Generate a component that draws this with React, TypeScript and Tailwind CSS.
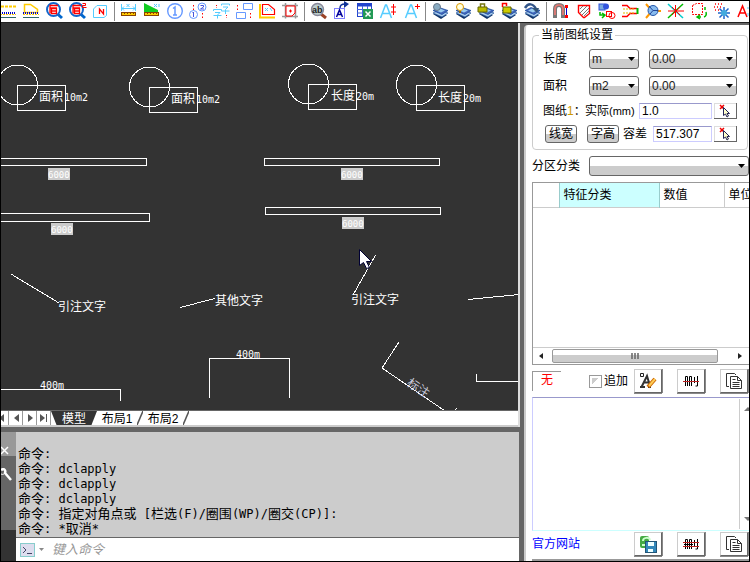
import React from "react";

const UI = "font-['Liberation_Sans','Noto_Sans_CJK_SC',sans-serif]";
const MONO = "font-['DejaVu_Sans_Mono','Noto_Sans_CJK_SC',monospace]";

type IconProps = { children: React.ReactNode };

function ToolIcon({ children }: IconProps) {
  return (
    <svg width="23" height="21" viewBox="0 0 23 21" fill="none" aria-hidden="true">
      {children}
    </svg>
  );
}

function Ruler() {
  return (
    <g>
      <rect x="4.500" y="11.500" width="14" height="3" fill="#fc0" stroke="#840" />
      <path d="M7.500 11v2M10.500 11v2M13.500 11v2M16.500 11v2" stroke="#840" />
    </g>
  );
}

function GroundLines() {
  return (
    <g>
      <path d="M4 12h16" stroke="#00c" strokeDasharray="1 1" strokeWidth="2" />
      <path d="M4 13.500h16" stroke="#fc0" strokeDasharray="2 1" />
      <path d="M4 16.500h16" stroke="#366" />
    </g>
  );
}

function Magnifier() {
  return (
    <g>
      <path d="M15 12.500l5 4.500" stroke="#06c" strokeWidth="3" />
      <circle cx="11.500" cy="8.500" r="6.500" fill="#fff" stroke="#16c" strokeWidth="2" />
      <path d="M8 12.500V4.500h8M9.500 7.500h5v5h-5zM8 7h7M9.500 10h5" stroke="#f00" strokeWidth="1.300" />
    </g>
  );
}

function Layers() {
  return (
    <g>
      <path d="M5 13l5-2 9 3-6 4z" fill="#136" />
      <path d="M5 12l6-3 9 3-6 4z" fill="#ace" stroke="#259" strokeWidth=".7" />
      <path d="M5 9.500l6-3 9 3-6 4z" fill="#46b" stroke="#149" strokeWidth=".7" />
      <path d="M8 9.500l4-2 5 2-4 2z" fill="#9ce" />
    </g>
  );
}

const blue = "#69f";
const sky = "#5cf";

const groups: { label: string; art: React.ReactNode }[][] = [
  [
    { label: "线", art: <><path d="M5 5.500h15" stroke="#fc0" strokeWidth="2" strokeDasharray="3 1" /><GroundLines /></> },
    { label: "面", art: <><path d="M5.500 11.500v-8h6l7 5v3z" stroke="#fc0" strokeWidth="1.500" /><GroundLines /></> },
    { label: "查找", art: <Magnifier /> },
    { label: "查找2", art: <><Magnifier /><path d="M17.500 2.500h3v2h-3v2h4" stroke="#f00" /></> },
    { label: "编号", art: <><path d="M9 4.500h9.500v10L16 16.500H5.500V8z" stroke={sky} /><path d="M11.500 13V8l4 5V8" stroke="#f00" strokeWidth="1.300" /></> },
  ],
  [
    { label: "测长", art: <><path d="M4.500 3v7M18.500 3v7M5 7.500h13M7 5.500l-2 2 2 2M16 5.500l2 2-2 2M9.500 3l3 3m0-3l-3 3" stroke={sky} /><Ruler /></> },
    { label: "测面", art: <><path d="M4 2l14 7v2H4z" fill="#1c2" /><path d="M14 3l3 3m0-3l-3 3m5-3v3" stroke={sky} /><Ruler /></> },
    { label: "序号", art: <><circle cx="12" cy="10" r="7.300" stroke={blue} strokeWidth="1.400" /><path d="M10 7.500l2-1.500v8M10 14h4" stroke={blue} strokeWidth="1.500" /></> },
    { label: "重排序号", art: <><circle cx="7.500" cy="13.500" r="4" stroke={blue} /><circle cx="16" cy="6" r="4" stroke={blue} /><path d="M6.500 12l1-1v5M14.500 4.500h3v1.500l-3 2h3.500" stroke="#45d" /><path d="M7.500 4v5M16.500 12v5" stroke="#f00" strokeDasharray="1.500 2" /></> },
    { label: "文字", art: <><path d="M4.500 10V8.500h8V10M6 11.500h5L8.500 14v3.500M4.500 14.500h8M12.500 4.500V3h8v1.500M14 6h5l-2.500 2.500V13M12.500 10h8" stroke={sky} /><path d="M7.500 4v3M17.500 14v3" stroke="#f00" strokeDasharray="1 1.500" /></> },
    { label: "图框", art: <><path d="M4.500 11.500h9v6h-9zM11.500 2.500h9v6h-9z" stroke={blue} /><path d="M5.500 4v5M18.500 12v5" stroke="#f00" strokeDasharray="1.500 2" /></> },
    { label: "区域标尺", art: <><path d="M5 3v13.500h15" stroke="#fc0" strokeWidth="2" /><path d="M7.500 13.500v-10h6l6 5v5z" stroke="#f00" strokeWidth="1.200" /><path d="M10 7l3 3m0-3l-3 3m5-3l2 3" stroke={sky} /></> },
    { label: "裁剪", art: <><path d="M7.500 2v15.500M17.500 2v15.500M4 4.500h16M4 15.500h16" stroke="#999" strokeWidth="1.500" /><path d="M8 5h9v7l-3 3H8z" fill="#fff" stroke="#f00" /><path d="M12.500 8.500v3M11 10h3" stroke="#f00" /></> },
  ],
  [
    { label: "查找文字", art: <><path d="M14 13l5 4" stroke="#9a4326" strokeWidth="3" /><circle cx="10.500" cy="8.500" r="6" fill="#bcc" stroke="#889" strokeWidth="1.400" /><text x="5" y="12" fontSize="9" fontWeight="700" fill="#222" fontFamily="Liberation Sans">ab</text></> },
    { label: "文字移动", art: <><rect x="4.500" y="7.500" width="10" height="10" stroke="#00f" strokeDasharray="1 1" /><path d="M6.500 16l3-7 3 7M8 13.500h4" stroke="#009" strokeWidth="1.500" /><path d="M10 7c0-3 2-4 5-4" stroke="#139" strokeWidth="1.500" /><path d="M14 0l5 3-5 4z" fill="#139" /></> },
    { label: "导出表格", art: <><rect x="4.500" y="2.500" width="14" height="13" fill="#fff" stroke="#24c" /><path d="M4 4h15" stroke="#24c" strokeWidth="3" /><path d="M4 8.500h15M4 12h15M9.500 5v10M14.500 5v10" stroke="#46d" /><rect x="10" y="8" width="10" height="10" fill="#295" /><path d="M12.500 10.500l5 5m0-5l-5 5" stroke="#fff" strokeWidth="1.500" /></> },
    { label: "文字高度", art: <><path d="M4.500 17l5-13h1l5 13M6 12.500h8" stroke={sky} strokeWidth="1.500" /><path d="M17.500 3v11M15 6h5M15 11h5" stroke="#f00" /></> },
    { label: "文字加高", art: <><path d="M6.500 17l5-13h1l5 13M8 12.500h8" stroke={sky} strokeWidth="1.500" /><path d="M18.500 3v5M16 5.500h5" stroke="#f00" /></> },
  ],
  [
    { label: "图层关闭", art: <><Layers /><circle cx="9" cy="6" r="3.500" fill="#8aacc2" stroke="#678" /></> },
    { label: "图层打开", art: <><Layers /><circle cx="9" cy="6" r="3.500" fill="#ffd" stroke="#d90" /><path d="M8 10h2v2H8z" fill="#960" /></> },
    { label: "图层锁定", art: <><Layers /><path d="M6.500 6V3h4v3" stroke="#771" strokeWidth="1.500" /><path d="M4 6h9v5H4z" fill="#bb0" stroke="#660" /></> },
    { label: "图层解锁", art: <><Layers /><path d="M5.500 6V2.500h4V5" stroke="#f00" strokeWidth="1.500" /><path d="M6 6h8v6H6z" fill="#cc0" stroke="#660" /></> },
    { label: "图层恢复", art: <><Layers /><path d="M5 7c3-5 8-5 11 1" stroke="#358" strokeWidth="2.500" /><path d="M12 7h7l-2 5z" fill="#357" /></> },
  ],
  [
    { label: "吸附", art: <><path d="M6 17V8q0-4 4-4t4 4v9" stroke="#777" strokeWidth="4" /><path d="M6 14V8q0-4 4-4t4 4v6" stroke="#e87872" strokeWidth="1.700" /><path d="M17.500 5v11" stroke="#00c" /><path d="M16 4h3v3h-3zM16 14h3v3h-3z" fill="#f00" /></> },
    { label: "填充", art: <><path d="M6.500 4.500h11v8l-5 4h-1l-5-5z" stroke="#f00" strokeWidth="1.400" /><path d="M8 8l3-3M8 12l7-7M10 14l7-7M12 15l5-5" stroke="#777" /></> },
    { label: "复制图形", art: <><rect x="4" y="3" width="6" height="6" fill="#7ad" stroke="#35d" /><circle cx="11" cy="5.500" r="3" fill="#35d" /><path d="M5 11v3h4M7 12l3 2-3 3" stroke="#0b0" strokeWidth="1.500" /><rect x="11.500" y="10.500" width="5" height="5" stroke="#f00" /><circle cx="17" cy="14.500" r="3" stroke="#f00" /></> },
    { label: "延伸", art: <><path d="M4 4.500h5l3 3h7M4 15.500h5l3-3h7" stroke="#f00" strokeWidth="1.500" /><path d="M5 8h11M5 12h11" stroke="#db0" strokeDasharray="2 1" /><path d="M19.500 7v6" stroke="#0b0" strokeWidth="2" /></> },
    { label: "交点", art: <><path d="M5 3l6 7h9M5 17l6-7" stroke="#f90" strokeWidth="2" /><circle cx="12" cy="9.500" r="5" fill="#8be" stroke="#25a" /><path d="M12 9.500L8 5M12 9.500h5M12 9.500L9 13" stroke="#249" /></> },
    { label: "打断", art: <><path d="M4 3l15 14" stroke="#0cc" strokeWidth="1.500" /><path d="M19 3L4 17" stroke="#0b0" strokeWidth="1.500" /><path d="M11.500 4v12M4 10h16M8 6l8 8M8 14l8-8" stroke="#f00" /></> },
    { label: "旋转", art: <><path d="M5.500 4.500l4-2h6v11h-10z" stroke="#f00" strokeDasharray="2 1" /><path d="M18 6v3M10 16h4M17 16q3-1 2-5M13 14l-3 2 3 2" stroke="#0b0" strokeWidth="1.500" /></> },
    { label: "爆炸", art: <><path d="M5 3h8M4 6h9M5 9h4" stroke="#f00" strokeDasharray="1 2" strokeWidth="1.500" /><path d="M14 6v12M8 12h12M9.500 7.500l9 9M18.500 7.500l-9 9" stroke="#26c" strokeWidth="1.500" /><circle cx="14" cy="12" r="3" fill="#4ad" /></> },
    { label: "文字样式", art: <><path d="M5 16L9.500 5 14 16M7 12h5" stroke="#f00" strokeWidth="1.500" /><path d="M15 6v2M15 12v3" stroke={sky} /></> },
  ],
];

function Toolbar() {
  return (
    <div className="h-[21px] shrink-0 overflow-hidden bg-white">
      <div className="-ml-[5px] flex">
        {groups.map((group, g) => (
          <React.Fragment key={g}>
            {g > 0 && (
              <span className="flex w-1.5 shrink-0 justify-center py-px">
                <span className="w-px bg-[#888]" />
              </span>
            )}
            {group.map((tool) => (
              <button key={tool.label} type="button" aria-label={tool.label} className="shrink-0">
                <ToolIcon>{tool.art}</ToolIcon>
              </button>
            ))}
          </React.Fragment>
        ))}
      </div>
    </div>
  );
}

const callouts = [
  { cx: 17.5, cy: 85, x: 39, y: 101, name: "面积", value: "10m2" },
  { cx: 149.5, cy: 87, x: 171, y: 103, name: "面积", value: "10m2" },
  { cx: 308.5, cy: 84, x: 331, y: 100, name: "长度", value: "20m" },
  { cx: 416.5, cy: 85, x: 438, y: 102, name: "长度", value: "20m" },
];

const beams = [
  { x: -4.5, y: 158.5, w: 151, h: 7, lx: 48, ly: 168 },
  { x: -4.5, y: 213.5, w: 154, h: 8, lx: 51, ly: 223 },
  { x: 264.5, y: 158.5, w: 175, h: 7, lx: 341, ly: 168 },
  { x: 265.5, y: 207.5, w: 175, h: 7, lx: 342, ly: 217 },
];

function Canvas() {
  return (
    <div className="min-h-0 flex-1 overflow-hidden bg-[#333]">
      <svg width="100%" height="100%" className="block" fill="none" stroke="#fff" shapeRendering="crispEdges">
        <g transform="translate(-1 -23)">
          {callouts.map((c) => (
            <g key={c.cx}>
              <circle cx={c.cx} cy={c.cy} r="20" />
              <rect x={Math.floor(c.cx) + 0.5} y={c.cy + 0.5} width="48" height="25" />
              <g fill="#fff" stroke="none" className={MONO}>
                <text x={c.x} y={c.y} fontSize="12">{c.name}</text>
                <text x={c.x + 25} y={c.y} fontSize="10">{c.value}</text>
              </g>
            </g>
          ))}
          {beams.map((b) => (
            <g key={b.ly + b.lx}>
              <rect x={b.x} y={b.y} width={b.w} height={b.h} />
              <rect x={b.lx} y={b.ly} width="22" height="12" fill="#ccc" stroke="none" />
              <text x={b.lx} y={b.ly + 10} fontSize="9" fill="#fff" stroke="none" className={MONO}>6000</text>
            </g>
          ))}
          <path d="M11 274l48 29M180 307.500l35-9M375.500 255L353 295M468 299.500l51-5" />
          <path d="M0 389.500h120.500V401M209.500 398v-39.500h80V398M476.500 374v7.500H520" />
          <path d="M399 342l-17 26 63 43M454 411l3-3" />
          <g fill="#fff" stroke="none" className={MONO}>
            <g fontSize="12">
              <text x="58" y="311">引注文字</text>
              <text x="215" y="305">其他文字</text>
              <text x="351" y="304">引注文字</text>
              <text transform="translate(406 385) rotate(33)" fill="#ccd">标注</text>
            </g>
            <g fontSize="10">
              <text x="40" y="389">400m</text>
              <text x="236" y="358">400m</text>
            </g>
          </g>
          <path d="M359.500 249.500v16l4-3 3 6 3-1-3-6h5z" fill="#fff" stroke="#003" shapeRendering="auto" />
        </g>
      </svg>
    </div>
  );
}

function Slash() {
  return (
    <svg width="6" height="14" viewBox="0 0 6 14" className="shrink-0" aria-hidden="true">
      <path d="M6 0L0 14" stroke="#555" strokeWidth="1.500" />
    </svg>
  );
}

function LayoutTabs() {
  const arrows = ["M7 2v8L2 6zM0 2h1v8H0z", "M8 2v8L3 6z", "M3 2v8l5-4z", "M1 2v8l5-4zM7 2h1v8H7z"];
  return (
    <div className={`flex h-[17px] shrink-0 border-t border-[#666] border-b-2 border-b-[#ccc] bg-white text-[12px] leading-4 ${UI}`}>
      <div className="-ml-1.5 flex">
        {arrows.map((d, i) => (
          <button key={i} type="button" aria-label={["第一个", "上一个", "下一个", "最后一个"][i]} className="flex w-[14px] items-center justify-center border-r border-[#999]">
            <svg width="10" height="12" viewBox="0 0 10 12" aria-hidden="true"><path d={d} fill="#555" /></svg>
          </button>
        ))}
      </div>
      <button type="button" className="w-[46px] bg-[#333] text-center text-white [clip-path:polygon(0_0,100%_0,88%_100%,12%_100%)]">模型</button>
      <button type="button" className="w-10 text-center text-black">布局1</button>
      <Slash />
      <button type="button" className="w-10 text-center text-black">布局2</button>
      <Slash />
    </div>
  );
}

/* Latin runs are set one pixel smaller so that they sit evenly with the CJK text. */
function LogLine({ text }: { text: string }) {
  const runs = text.match(/[\u4e00-\u9fff]+|[^\u4e00-\u9fff]+/g) ?? [];
  return (
    <div className="h-[15px] text-[13px] leading-[15px] whitespace-pre">
      {runs.map((run, i) => (/[\u4e00-\u9fff]/.test(run) ? run : <span key={i} className="text-[12px]">{run}</span>))}
    </div>
  );
}

function CommandWindow() {
  return (
    <div className={`flex h-[129px] shrink-0 ${MONO}`}>
      <div className="flex w-[15px] shrink-0 flex-col bg-[#333] text-white">
        <button type="button" aria-label="关闭" className="flex h-6 items-end bg-[#999]">
          <svg width="9" height="9" viewBox="0 0 9 9" className="mb-px" aria-hidden="true"><path d="M0 1l7 7M7 1L0 8" stroke="#fff" strokeWidth="1.500" /></svg>
        </button>
        <button type="button" aria-label="自定义" className="flex h-[74px] items-start bg-[#666] pt-3">
          <svg width="12" height="16" viewBox="0 0 12 16" aria-hidden="true">
            <path d="M0 2c3-2 5 0 4 3l6 7" stroke="#fff" strokeWidth="2.500" fill="none" />
            <path d="M0 6c2 1 3 0 4-1" stroke="#fff" fill="none" />
          </svg>
        </button>
      </div>
      <div className="flex min-w-0 flex-1 flex-col">
        <div className="flex-1 overflow-hidden bg-[#ccc] pt-3.5 pl-0.5 text-black">
          <LogLine text="命令:" />
          <LogLine text="命令: dclapply" />
          <LogLine text="命令: dclapply" />
          <LogLine text="命令: dclapply" />
          <LogLine text="命令: 指定对角点或 [栏选(F)/圈围(WP)/圈交(CP)]:" />
          <LogLine text="命令: *取消*" />
        </div>
        <label className="flex h-6 shrink-0 items-center border-t border-[#666] bg-white pl-1">
          <svg width="28" height="14" viewBox="0 0 28 14" fill="none" className="shrink-0" aria-hidden="true">
            <rect x=".5" y=".5" width="14" height="13" fill="#dde" stroke="#8cc" />
            <path d="M3 4l3 3-3 3M7 10.500h5" stroke="#446" />
            <path d="M19 5h5l-2.500 3z" fill="#888" />
          </svg>
          <input aria-label="命令行" placeholder="键入命令" className="ml-1 min-w-0 flex-1 text-[13px] leading-4 italic outline-none placeholder:text-[#999]" />
        </label>
      </div>
    </div>
  );
}

function Dropdown({ label, value, className }: { label: string; value: string; className: string }) {
  return (
    <span className={`relative flex h-5 ${className}`}>
      <select aria-label={label} className="w-full appearance-none rounded-[3px] border border-[#666] bg-linear-to-b from-white from-50% to-[#ccc] to-50% pl-0.5 text-[12px] leading-4 text-[#222]">
        <option>{value}</option>
      </select>
      <svg width="7" height="4" viewBox="0 0 7 4" className="pointer-events-none absolute top-2 right-1" aria-hidden="true">
        <path d="M0 0h7L3.500 4z" fill="#000" />
      </svg>
    </span>
  );
}

function PickButton({ label }: { label: string }) {
  return (
    <button type="button" aria-label={label} className="flex h-4 w-[23px] shrink-0 items-center justify-center border-r border-b border-[#666] shadow-[inset_1px_1px_#ddd]">
      <svg width="12" height="14" viewBox="0 0 12 14" aria-hidden="true">
        <path d="M1 1l4 4M5 1L1 5" stroke="#e00" strokeWidth="1.500" />
        <path d="M4.500 3.500v8l2-1.500 1.500 3 1.500-1-1.500-2.500h2.500z" fill="#ffc" stroke="#225" />
      </svg>
    </button>
  );
}

function PanelButton({ label, children }: { label: string; children: React.ReactNode }) {
  return (
    <button type="button" aria-label={label} className="flex h-6 w-7 shrink-0 items-center justify-center border border-t-[#ccc] border-r-[#666] border-b-[#666] border-l-[#ccc] bg-white shadow-[1px_0_#888,0_1px_#888]">
      {children}
    </button>
  );
}

function DeleteGlyph({ double = false }: { double?: boolean }) {
  return (
    <svg width="16" height="12" viewBox="0 0 16 12" fill="none" aria-hidden="true">
      <path d="M2.500 11V1.500h2V11M6.500 11V1.500h2V11M11.500 2v6M14.500 1v10h-2M1 6.500h9" stroke="#000" />
      <path d={double ? "M0 4.500h16M0 8.500h16" : "M0 6.500h16"} stroke="#b22" />
    </svg>
  );
}

function CopyGlyph() {
  return (
    <svg width="18" height="18" viewBox="0 0 18 18" fill="none" stroke="#333" aria-hidden="true">
      <path d="M4 14.500H1.500v-13h8L11 3" />
      <path d="M5.500 4.500h7l4 4v8h-11z" fill="#fff" />
      <path d="M12.500 4.500v4h4M7.500 7.500h3M7.500 10.500h7M7.500 12.500h7M7.500 14.500h7" />
    </svg>
  );
}

function SettingsPanel() {
  const field = "h-4 w-0 min-w-0 flex-1 border border-[#ccf] border-t-[#99c] px-0.5 text-[12px] leading-[14px] text-black outline-none";
  const small = "h-[18px] rounded-[3px] border border-[#666] bg-linear-to-b from-white from-50% to-[#ccc] to-50% text-center leading-4";
  return (
    <fieldset className="mr-px h-[123px] min-w-0 rounded border border-[#ccc] pr-2.5 pl-2.5">
      <legend className="-ml-1 px-0.5 leading-4">当前图纸设置</legend>
      <div className="flex flex-col pt-0.5">
        <div className="flex h-[27px] items-center">
          <span className="w-[46px]">长度</span>
          <Dropdown label="长度单位" value="m" className="w-[50px]" />
          <Dropdown label="长度精度" value="0.00" className="ml-2.5 flex-1" />
        </div>
        <div className="flex h-[27px] items-center">
          <span className="w-[46px]">面积</span>
          <Dropdown label="面积单位" value="m2" className="w-[50px]" />
          <Dropdown label="面积精度" value="0.00" className="ml-2.5 flex-1" />
        </div>
        <div className="flex h-6 items-center">
          <label htmlFor="actual" className="flex w-24 shrink-0 items-center whitespace-nowrap">
            <span className="w-[42px]">图纸<span className="text-[#c90]">1</span>：</span>实际<span className="text-[11px]">(mm)</span>
          </label>
          <input id="actual" defaultValue="1.0" className={field} />
          <span className="ml-0.5 flex"><PickButton label="拾取实际值" /></span>
        </div>
        <div className="flex h-[22px] items-center">
          <button type="button" className={`ml-0.5 w-8 shrink-0 ${small}`}>线宽</button>
          <button type="button" className={`ml-2.5 w-8 shrink-0 ${small}`}>字高</button>
          <label htmlFor="tolerance" className="ml-1 w-[30px] shrink-0">容差</label>
          <input id="tolerance" defaultValue="517.307" className={field} />
          <span className="ml-0.5 flex"><PickButton label="拾取容差" /></span>
        </div>
      </div>
    </fieldset>
  );
}

function FeatureTable() {
  return (
    <div className="flex h-[183px] flex-col overflow-hidden border border-r-0 border-[#999]">
      <table className="w-full table-fixed border-collapse text-left">
        <thead>
          <tr className="h-6 border-b border-[#ccc]">
            <th scope="col" aria-label="序号" className="w-[26px] font-normal" />
            <th scope="col" className="w-[100px] border-x border-[#9cc] bg-[#cff] pl-1 font-normal">特征分类</th>
            <th scope="col" className="w-[65px] border-r border-[#ccc] pl-1 font-normal">数值</th>
            <th scope="col" className="pl-1 font-normal whitespace-nowrap">单位</th>
          </tr>
        </thead>
        <tbody />
      </table>
      <div className="mt-auto mb-px flex h-4 items-center border-t border-[#ccc] px-1.5">
        <svg width="5" height="6" viewBox="0 0 5 6" aria-hidden="true"><path d="M4 0v6L0 3z" fill="#222" /></svg>
        <div className="mr-5 ml-2 flex h-3.5 flex-1 justify-center rounded-xs border border-[#999] bg-linear-to-b from-white from-45% to-[#ccc] to-45% pt-[3px]">
          <svg width="8" height="6" viewBox="0 0 8 6" aria-hidden="true"><path d="M1 0v6M4 0v6M7 0v6" stroke="#666" strokeWidth="1.500" /></svg>
        </div>
        <svg width="5" height="6" viewBox="0 0 5 6" aria-hidden="true"><path d="M0 0v6l4-3z" fill="#222" /></svg>
      </div>
    </div>
  );
}

function SidePanel() {
  return (
    <aside className={`mt-0.5 flex w-[225px] shrink-0 flex-col overflow-hidden rounded-tl border-l-2 border-[#ccc] bg-white pl-1.5 text-[12px] text-black ${UI}`}>
      <div className="pt-0.5"><SettingsPanel /></div>
      <div className="mt-1.5 flex h-5 shrink-0 items-center">
        <span className="w-[57px]">分区分类</span>
        <Dropdown label="分区分类" value="" className="flex-1" />
      </div>
      <div className="mt-1.5"><FeatureTable /></div>
      <div className="mt-1 flex h-6 shrink-0 items-center pr-px">
        <span className="h-5 w-[29px] border-t border-l border-[#999] text-center leading-4 text-[#f00]">无</span>
        <label className="ml-7 flex items-center gap-0.5">
          <input type="checkbox" className="size-[13px] appearance-none border border-[#999] bg-linear-to-br from-[#ccc] from-50% to-white to-50% shadow-[inset_0_0_0_2px_white]" />
          追加
        </label>
        <div className="ml-auto flex gap-[15px]">
          <PanelButton label="文字编辑">
            <svg width="18" height="18" viewBox="0 0 18 18" fill="none" aria-hidden="true">
              <path d="M1.500 1.500h3v3h-3z" stroke="#222" />
              <path d="M2.500 15L8 4l3 10M5 10.500h6M1 15h5M9 15h3" stroke="#333" strokeWidth="2" />
              <path d="M9 15l7-8" stroke="#c60" strokeWidth="4" />
              <path d="M10 14l6-7" stroke="#fc5" strokeWidth="2" />
            </svg>
          </PanelButton>
          <PanelButton label="删除"><DeleteGlyph /></PanelButton>
          <PanelButton label="复制"><CopyGlyph /></PanelButton>
        </div>
      </div>
      <div className="mt-1 flex min-h-0 flex-1 border border-r-0 border-t-[#99c] border-b-[#cff] border-l-[#ccf]">
        <textarea aria-label="内容" className="min-w-0 flex-1 resize-none outline-none" />
        <div className="my-px flex w-2.5 flex-col items-end justify-between border-l border-[#ccc] py-2">
          <svg width="5" height="4" viewBox="0 0 5 4" aria-hidden="true"><path d="M0 4h8L4 0z" fill="#777" /></svg>
          <svg width="5" height="4" viewBox="0 0 5 4" aria-hidden="true"><path d="M0 0h8L4 4z" fill="#777" /></svg>
        </div>
      </div>
      <div className="mb-[3px] flex h-[25px] shrink-0 items-center pr-px">
        <a href="#site" className="text-[#00f]">官方网站</a>
        <div className="ml-auto flex gap-[15px]">
          <PanelButton label="保存表格">
            <svg width="18" height="18" viewBox="0 0 18 18" fill="none" aria-hidden="true">
              <rect x="1" y="1" width="9" height="12" rx="2" fill="#4a4" />
              <path d="M4 6c0-4 6-4 7-1M3 10h4" stroke="#cfc" strokeWidth="2" />
              <rect x="6.500" y="6.500" width="11" height="11" fill="#38b" stroke="#257" />
              <path d="M9 7h6v4H9zM9 14h5v3H9z" fill="#eff" />
            </svg>
          </PanelButton>
          <PanelButton label="全部删除"><DeleteGlyph double /></PanelButton>
          <PanelButton label="全部复制"><CopyGlyph /></PanelButton>
        </div>
      </div>
      <div className="h-0.5 shrink-0 bg-[#999]" />
    </aside>
  );
}

export default function App() {
  return (
    <div className="flex h-screen flex-col overflow-hidden border border-black bg-[#666]">
      <Toolbar />
      <div className="flex min-h-0 flex-1 border-t border-[#222]">
        <main className="flex min-w-0 flex-1 flex-col">
          <div className="flex min-h-0 flex-1 flex-col border-r-2 border-[#ddd]">
            <Canvas />
            <LayoutTabs />
          </div>
          <div className="mt-[5px] flex flex-col pr-px"><CommandWindow /></div>
        </main>
        <div className="w-1 shrink-0 bg-[#666]" />
        <SidePanel />
      </div>
    </div>
  );
}
